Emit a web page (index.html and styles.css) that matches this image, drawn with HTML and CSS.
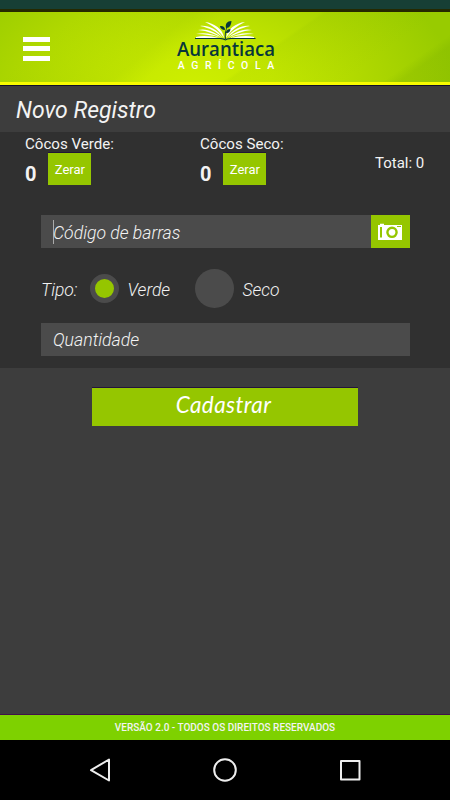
FILE: index.html
```html
<!DOCTYPE html>
<html lang="pt-BR">
<head>
<meta charset="utf-8">
<title>Novo Registro</title>
<link rel="stylesheet" href="styles.css">
</head>
<body>
<div class="status"></div>
<header class="header">
  <div class="menu"><i></i><i></i><i></i></div>
  <svg class="logo" width="120" height="65" viewBox="0 0 120 65">
    <g fill="#fff">
      <path d="M59 26C58 17 49 11 40 10C48 14 54 18 59 26Z"/>
      <path d="M58 26C52 17 43 13 35 14C45 16 52 20 58 26Z"/>
      <path d="M57 26C50 20 42 16 33 18C43 19 50 22 57 26Z"/>
      <path d="M56 26C48 22 40 20 31 22C40 22 47 23 56 26Z"/>
      <path d="M54 26C46 24 38 23 31 25L31 26Z"/>
      <path d="M61 26C62 17 71 11 80 10C72 14 66 18 61 26Z"/>
      <path d="M62 26C68 17 77 13 85 14C75 16 68 20 62 26Z"/>
      <path d="M63 26C70 20 78 16 87 18C77 19 70 22 63 26Z"/>
      <path d="M64 26C72 22 80 20 89 22C80 22 73 23 64 26Z"/>
      <path d="M66 26C74 24 82 23 89 25L89 26Z"/>
    </g>
    <g fill="#06363b">
      <path d="M30 26H56Q60 26.400 60.500 27.400Q61 26.400 65 26H90.500V27H66Q62 27.200 60.500 28.600Q58 27.200 55 27H30Z"/>
      <path d="M61 16C60 12 62 9 66.500 9C66 13 65 16 61 16Z"/>
      <path d="M60 18C57 18 55 16 55 14C58 13.500 60 15 60 18Z"/>
      <path d="M61 21C61 18 63 17 65.500 17C65 20 64 21 61 21Z"/>
      <path d="M60 27Q59 21 62 14L62.600 14.300Q60 21 61 27Z"/>
    </g>
    <text class="brand" x="12" y="44" textLength="98" lengthAdjust="spacingAndGlyphs">Aurantiaca</text>
    <text class="sub" x="12.700" y="57" textLength="96.500">AGRÍCOLA</text>
  </svg>
</header>
<h1 class="title"><span>Novo Registro</span></h1>
<main class="panel">
  <section class="counts">
    <div class="count"><span class="label">Côcos Verde:</span><div class="row"><b>0</b><button>Zerar</button></div></div>
    <div class="count"><span class="label">Côcos Seco:</span><div class="row"><b>0</b><button>Zerar</button></div></div>
    <span class="total">Total: 0</span>
  </section>
  <div class="field code"><i class="caret"></i><span class="t-code">Código de barras</span>
    <div class="camera"><svg width="24" height="18" viewBox="0 0 24 18">
      <path fill="#fff" d="M0 2H2V.7H6V2H24V17H0Z"/>
      <path fill="#95c600" d="M2 4H4V14.500H2ZM19 3H23V4H19Z"/>
      <circle cx="14" cy="9.300" r="4.600" fill="#fff" stroke="#95c600" stroke-width="2.400"/>
    </svg></div>
  </div>
  <div class="types">
    <span class="t-tipo">Tipo:</span><i class="radio on"></i><span class="t-verde">Verde</span><i class="radio"></i><span class="t-seco">Seco</span>
  </div>
  <div class="field"><span class="t-quant">Quantidade</span></div>
</main>
<button class="submit"><span>Cadastrar</span></button>
<footer class="footer"><span>VERSÃO 2.0 - TODOS OS DIREITOS RESERVADOS</span></footer>
<nav class="nav">
  <svg width="450" height="60" viewBox="0 0 450 60" fill="none" stroke="#eee" stroke-width="2" stroke-linejoin="round">
    <path d="M109 19.500V40.500L91 30.200Z"/>
    <circle cx="225" cy="30" r="10.800"/>
    <rect x="341" y="21" width="18.500" height="18.500"/>
  </svg>
</nav>
</body>
</html>
```
FILE: styles.css
```css
* { box-sizing: border-box; }
body {
  margin: 0;
  width: 450px;
  height: 800px;
  display: flex;
  flex-direction: column;
  overflow: hidden;
  background: #3d3d3d;
  color: #f3f3f3;
  font-family: Roboto, sans-serif;
}
button { border: 0; padding: 0; margin: 0; color: #fff; background: #95c600; font-family: inherit; }
.status { height: 12px; background: #173f35; border-bottom: 3px solid #252900; }
.header {
  height: 74px;
  display: flex;
  align-items: flex-start;
  border-bottom: 1px solid #10102a;
  box-shadow: inset 0 -3px #f7fb00;
  background:
    linear-gradient(145deg, transparent 87%, rgba(90, 145, 0, .14) 90%, rgba(90, 145, 0, .14) 100%),
    linear-gradient(140deg, transparent 15%, rgba(120, 170, 0, .1) 36%, transparent 42%),
    linear-gradient(145deg, transparent 58%, rgba(120, 170, 0, .08) 59%, transparent 80%),
    radial-gradient(ellipse 260px 150px at 195px 76px, #ceef00 0%, #c5e800 30%, #acd600 70%, #98cb00 100%);
}
.menu { width: 27px; margin: 24.500px 0 0 23px; display: flex; flex-direction: column; gap: 4.500px; }
.menu i { height: 5px; background: #fff; }
.logo { margin-left: 115px; }
.brand { font: 600 19px "Open Sans", sans-serif; fill: #06363b; }
.sub { font: 500 10.500px Roboto, sans-serif; fill: #fff; }
.title { margin: 0; height: 46px; padding-left: 16px; font: italic 400 23px/49px Roboto, sans-serif; }
.panel { height: 236px; background: #303030; }
.counts { height: 83px; padding: 3px 25px 0; display: flex; }
.count { width: 175px; }
.label { display: block; height: 17px; font-size: 15.100px; line-height: 18px; }
.row { display: flex; gap: 12px; }
.row b { width: 11.400px; font-size: 20px; line-height: 44px; }
.row button { width: 43px; height: 33px; font-size: 13px; border-top: 1px solid #211636; }
.total { font-size: 15px; line-height: 18px; margin-top: 18.500px; white-space: nowrap; }
.field, .types { font-size: 17.900px; font-style: italic; font-weight: 300; }
.field { width: 369px; height: 33px; margin-left: 40.500px; padding-left: 12.500px; display: flex; background: #4b4b4b; line-height: 36px; }
.t-code { font-size: 17.600px; }
.t-quant { font-size: 17.700px; line-height: 35px; }
.caret { width: 1px; height: 24px; margin: 5px -1px 0 0; background: #aaa; }
.camera { width: 39px; height: 33px; margin-left: auto; background: #95c600; display: flex; align-items: center; justify-content: center; }
.types { height: 75px; padding-left: 41px; display: flex; align-items: center; }
.t-tipo { width: 48.500px; padding-top: 8px; font-size: 17.500px; }
.radio { flex: none; width: 39px; height: 39px; border-radius: 50%; background: #4b4b4b; margin-top: 6px; }
.radio.on { width: 29px; height: 29px; border: 5.500px solid #4b4b4b; background: #95c600; }
.t-verde { width: 76.500px; padding: 8px 0 0 9px; font-size: 17.500px; }
.t-seco { padding: 8px 0 0 8.500px; font-size: 17.500px; }
.submit { width: 266px; height: 39px; flex: none; margin: 19px 0 0 92px; border-top: 1px solid #24143c; font: italic 400 22.500px/34px Lato, sans-serif; letter-spacing: .4px; padding: 0 3px 5px 0; }
.footer { height: 26px; margin-top: auto; border-top: 1px solid #40104a; background: #7ed100; text-align: center; font-size: 10px; line-height: 26px; font-weight: 500; }
.nav { height: 60px; background: #000; }
.nav svg { display: block; }
```
